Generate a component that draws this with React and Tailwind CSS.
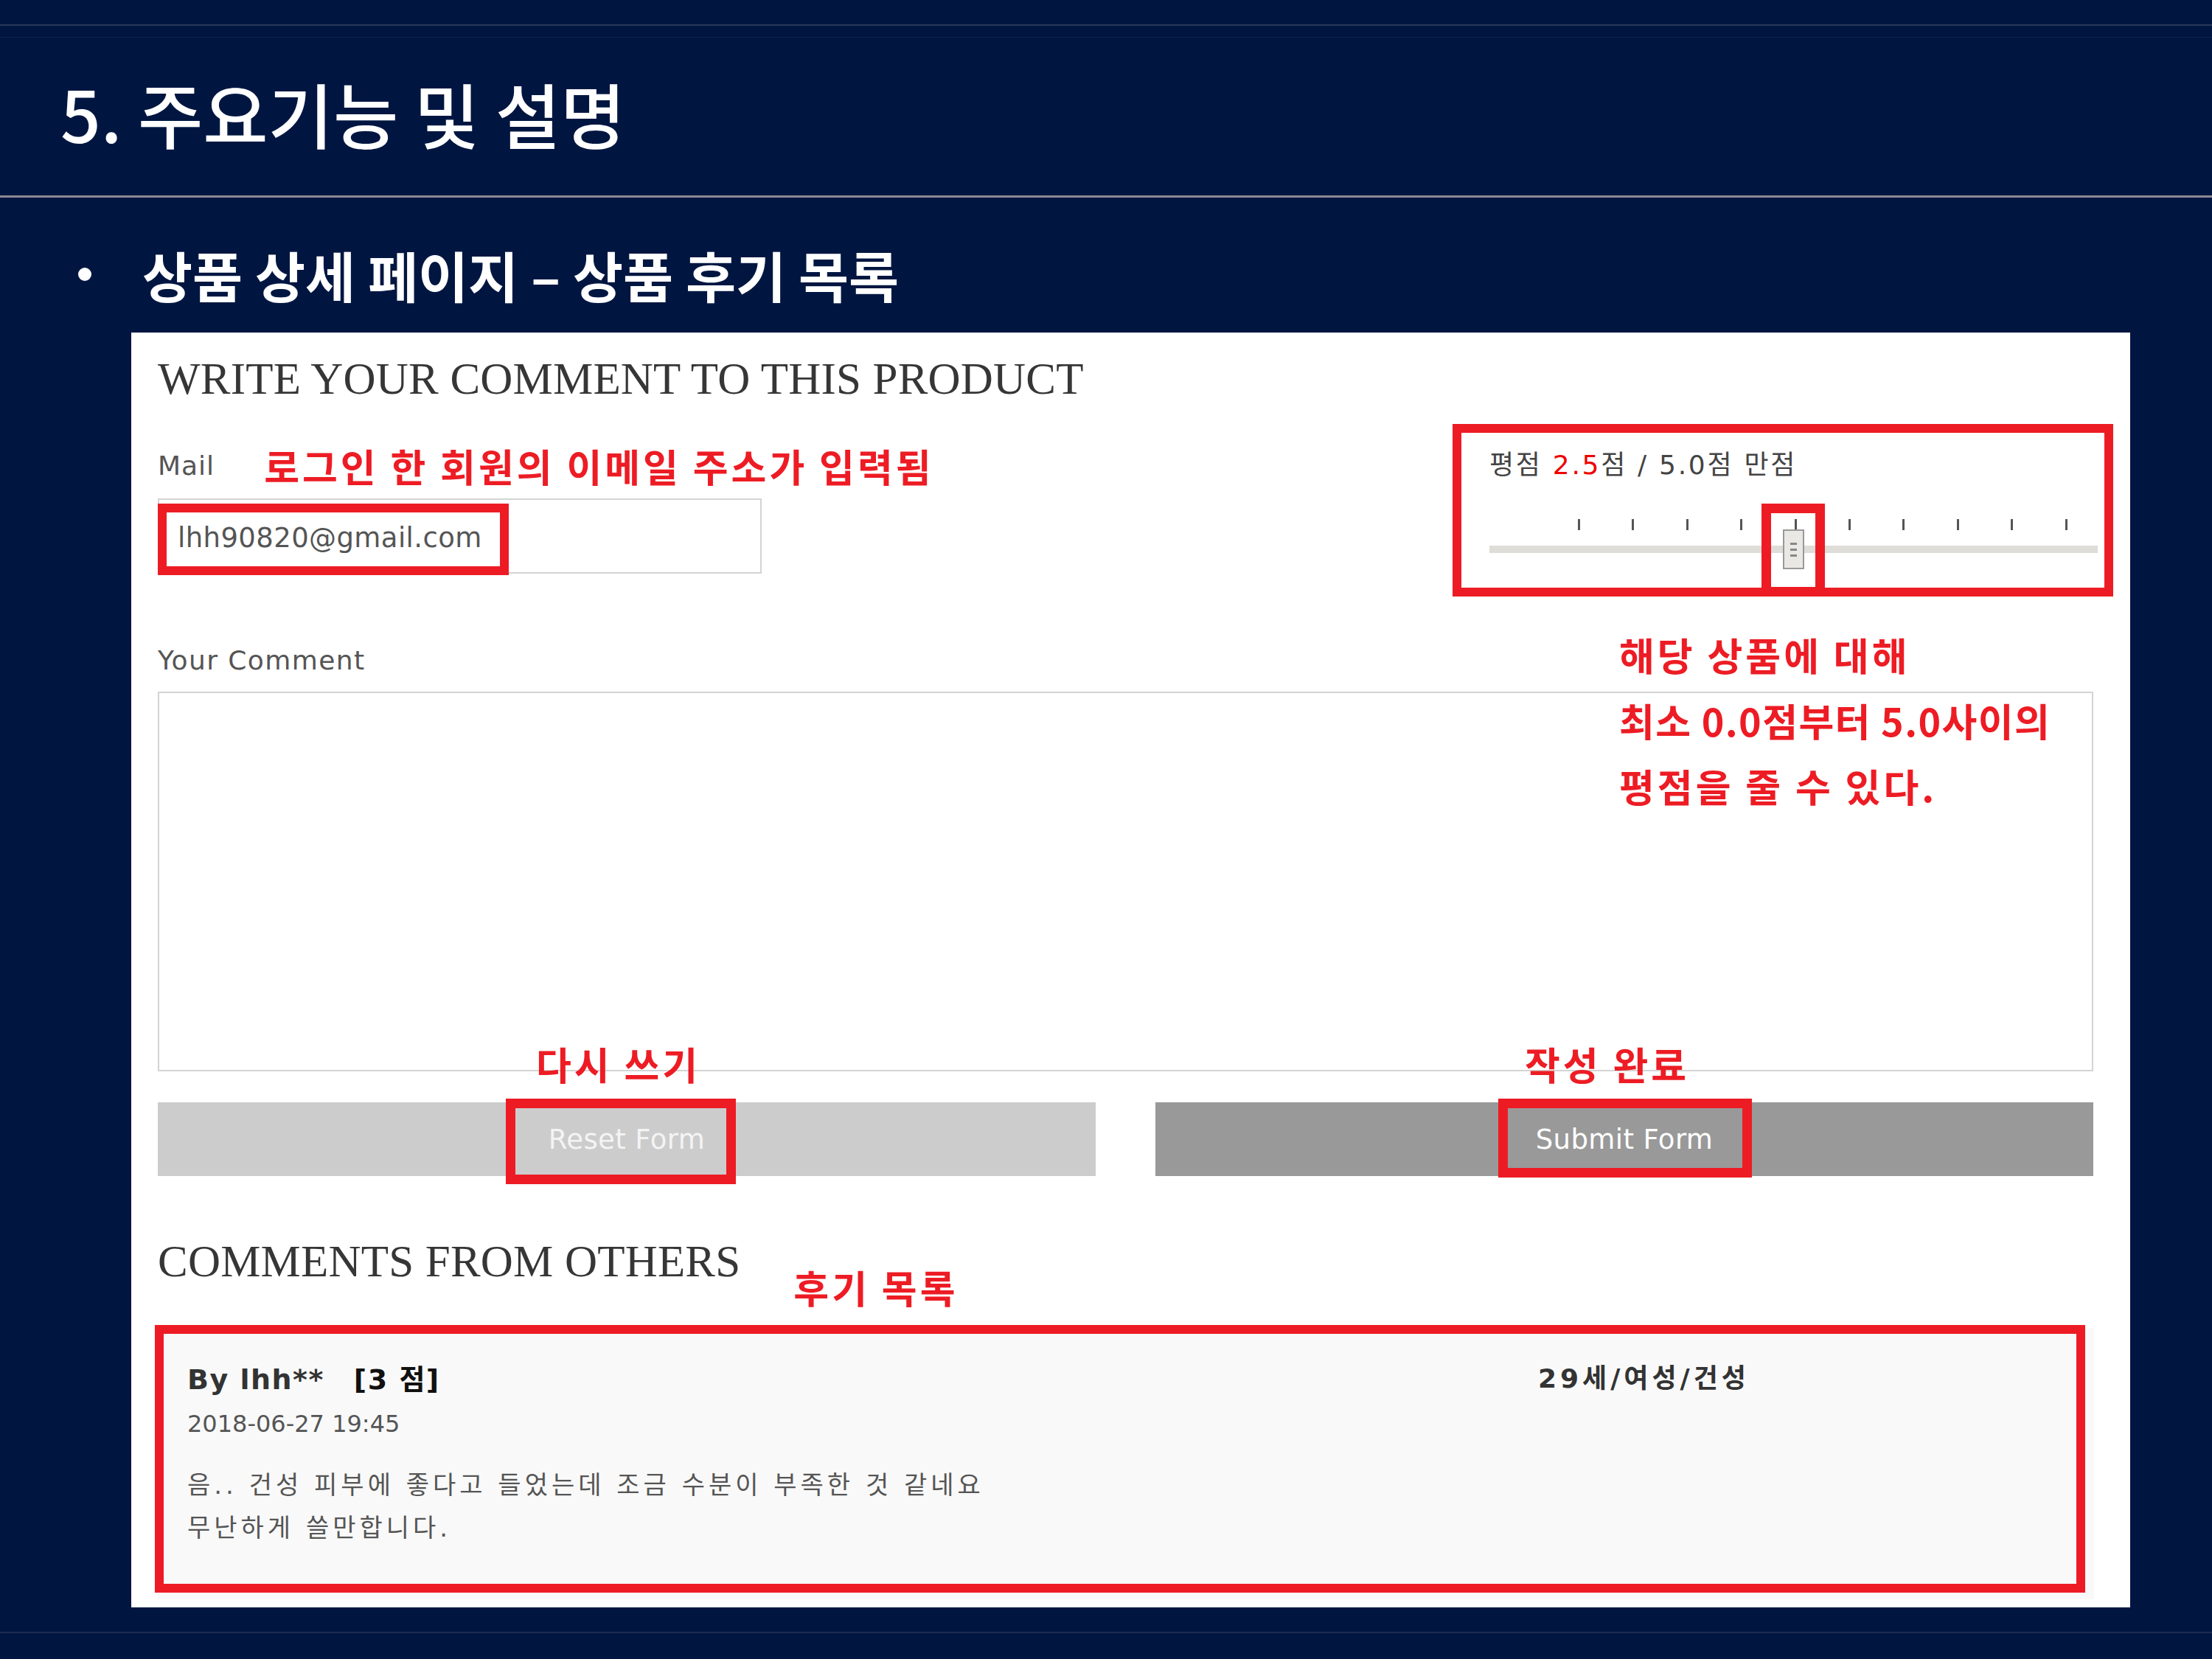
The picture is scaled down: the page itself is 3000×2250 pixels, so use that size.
import React from "react";

const sans = "font-['DejaVu_Sans','Noto_Sans_CJK_KR',sans-serif]";
const cjk = "font-['Noto_Sans_CJK_KR','Noto_Sans_CJK_SC',sans-serif]";
const serif = "font-['Liberation_Serif','Noto_Sans_CJK_KR',serif]";

function RedBox({ className }) {
  return (
    <div
      className={`absolute border-[12px] border-[#ed1c24] pointer-events-none ${className}`}
    />
  );
}

function RedNote({ children, className = "", tight = false }) {
  return (
    <div
      className={`${cjk} text-[52px] font-bold text-[#ed1c24] leading-[52px] whitespace-nowrap ${
        tight ? "tracking-[1.4px]" : "tracking-[4px]"
      } ${className}`}
    >
      {children}
    </div>
  );
}

function RatingSlider() {
  const ticks = Array.from({ length: 10 });
  return (
    <div className="relative mt-[50px] h-[80px]">
      {/* tick marks */}
      <div className="flex pl-[120px] gap-[70.4px] pt-[5px]">
        {ticks.map((_, i) => (
          <div key={i} className="w-[3px] h-[15px] bg-[#555]" />
        ))}
      </div>
      {/* track */}
      <div className="mt-[21px] h-[10px] w-full bg-[#deddd8]" />
      {/* handle */}
      <div className="absolute left-[398px] top-[19px] w-[29px] h-[54px] bg-[#e9e8e4] border-2 border-[#999] flex flex-col items-center justify-center gap-[5px]">
        <div className="w-[9px] h-[3px] bg-[#888]" />
        <div className="w-[9px] h-[3px] bg-[#888]" />
        <div className="w-[9px] h-[3px] bg-[#888]" />
      </div>
      <RedBox className="left-[369px] top-[-16px] w-[86px] h-[126px] border-[13px]" />
    </div>
  );
}

export default function App() {
  return (
    <div className="w-[3000px] h-[2250px] bg-[#001641] overflow-hidden flex flex-col">
      {/* top hairlines */}
      <div className="h-[33px]" />
      <div className="h-[2px] bg-[#2a3858]" />
      <div className="h-[15px]" />
      <div className="h-[1px] bg-[#0d224d]" />

      {/* slide title */}
      <h1
        className={`${cjk} mt-[54px] pl-[82px] text-[96px] leading-none font-medium text-white`}
      >
        5. 주요기능 및 설명
      </h1>
      <div className="mt-[64px] h-[3px] bg-[#8d8995]" />

      {/* bullet */}
      <div className="mt-[67px] flex items-center pl-[106px]">
        <div className="w-[18px] h-[18px] rounded-full bg-white" />
        <div
          className={`${cjk} ml-[69px] text-[74px] leading-none font-bold text-white`}
        >
          상품 상세 페이지 – 상품 후기 목록
        </div>
      </div>

      {/* screenshot panel */}
      <div className="mt-[42px] ml-[178px] w-[2711px] h-[1729px] bg-white pt-[32px] pl-[36px] pr-[50px] flex flex-col">
        <h2 className={`${serif} text-[61px] leading-none text-[#363636] tracking-[0.2px]`}>
          WRITE YOUR COMMENT TO THIS PRODUCT
        </h2>

        <div className="mt-[31px] flex justify-between">
          {/* mail */}
          <div className="pt-[31px] w-[819px]">
            <div className="flex items-center h-[52px]">
              <span className={`${sans} text-[36px] leading-none text-[#555] tracking-[1px]`}>Mail</span>
              <RedNote className="ml-[67px]">로그인 한 회원의 이메일 주소가 입력됨</RedNote>
            </div>
            <div className="relative mt-[18px] h-[102px] border-2 border-[#d4d4d4] flex items-center pl-[25px]">
              <span className={`${sans} text-[37px] leading-none text-[#555] tracking-[0.4px] mt-[4px]`}>
                lhh90820@gmail.com
              </span>
              <RedBox className="left-[-2px] top-[5px] w-[476px] h-[97px] border-[11px]" />
            </div>
          </div>

          {/* rating */}
          <div className="relative w-[825px] mr-[-6px] pt-[38px]">
            <RedBox className="left-[-50px] top-0 w-[896px] h-[234px]" />
            <div className={`${sans} text-[36px] leading-none text-[#444] tracking-[2.7px]`}>
              평점 <span className="text-[#ee0000]">2.5</span>점 / 5.0점 만점
            </div>
            <RatingSlider />
          </div>
        </div>

        {/* comment */}
        <div className={`${sans} mt-[99px] text-[36px] leading-none text-[#555] tracking-[1.4px]`}>
          Your Comment
        </div>
        <div className="relative mt-[24px] h-[515px] border-2 border-[#d4d4d4]">
          <div className="absolute left-[1980px] top-[-97px]">
            <RedNote className="leading-[89px]">해당 상품에 대해</RedNote>
            <RedNote className="leading-[89px]" tight>최소 0.0점부터 5.0사이의</RedNote>
            <RedNote className="leading-[89px]">평점을 줄 수 있다.</RedNote>
          </div>
        </div>

        {/* buttons */}
        <div className="mt-[42px] grid grid-cols-2 gap-[81px]">
          <div className="relative h-[100px] bg-[#cccccc] flex items-center justify-center">
            <span className={`${sans} text-[37px] leading-none text-[#f4f4f4] tracking-[0.4px]`}>Reset Form</span>
            <RedNote className="absolute left-[513px] top-[-78px]">다시 쓰기</RedNote>
            <RedBox className="left-[472px] top-[-5px] w-[312px] h-[116px] border-[13px]" />
          </div>
          <div className="relative h-[100px] bg-[#999999] flex items-center justify-center">
            <span className={`${sans} text-[37px] leading-none text-white tracking-[0.4px]`}>Submit Form</span>
            <RedNote className="absolute left-[501px] top-[-78px]">작성 완료</RedNote>
            <RedBox className="left-[465px] top-[-5px] w-[344px] h-[107px] border-[13px]" />
          </div>
        </div>

        {/* comments from others */}
        <div className="mt-[85px] flex items-start">
          <h2 className={`${serif} text-[61px] leading-none text-[#363636] tracking-[0.2px]`}>
            COMMENTS FROM OTHERS
          </h2>
          <RedNote className="ml-[72px] mt-[40px]">후기 목록</RedNote>
        </div>

        <div className="relative mt-[29px] h-[368px] mr-[-1px] bg-[#f9f9f9] pt-[51px] pl-[40px] pr-[467px]">
          <div className="flex justify-between">
            <div className={`${sans} flex text-[38px] leading-none font-bold tracking-[1.5px]`}>
              <span className="text-[#333]">By lhh**</span>
              <span className="ml-[40px] text-[#111]">[3 점]</span>
            </div>
            <div className={`${sans} text-[36px] leading-none font-bold text-[#333] tracking-[5px]`}>
              29세/여성/건성
            </div>
          </div>
          <div className={`${sans} mt-[25px] text-[32px] leading-none text-[#555]`}>
            2018-06-27 19:45
          </div>
          <div className={`${sans} mt-[38px] text-[34px] leading-[58px] text-[#555] tracking-[5px]`}>
            <div>음.. 건성 피부에 좋다고 들었는데 조금 수분이 부족한 것 같네요</div>
            <div>무난하게 쓸만합니다.</div>
          </div>
          <RedBox className="left-[-4px] top-[-4px] w-[2618px] h-[363px]" />
        </div>
      </div>

      {/* bottom hairline */}
      <div className="mt-[33px] h-[2px] bg-[#1c2b50]" />
    </div>
  );
}
